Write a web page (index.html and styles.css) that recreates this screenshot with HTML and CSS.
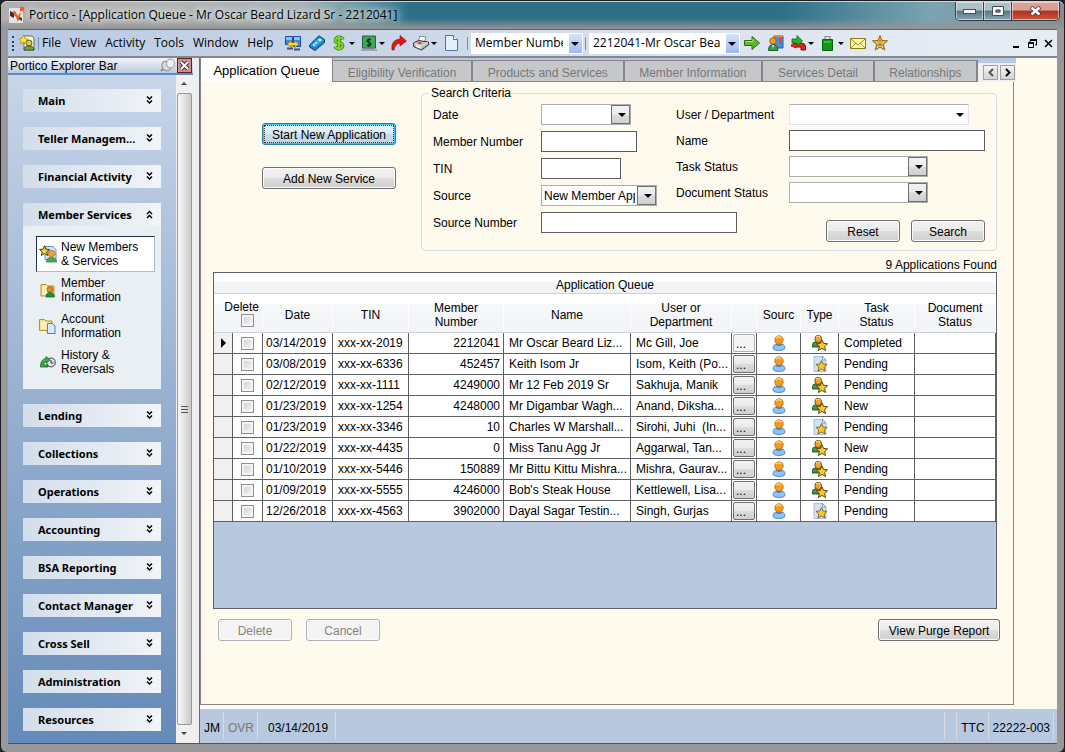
FILE: index.html
```html
<!DOCTYPE html>
<html lang="en">
<head>
  <meta charset="UTF-8" />
  <meta name="viewport" content="width=device-width, initial-scale=1.0" />
  <title>Portico - Application Queue</title>
  <link rel="stylesheet" href="styles.css">
</head>
<body>

  <!-- Shared icons -->
  <svg class="sprite" aria-hidden="true">
    <symbol id="i-person" viewBox="0 0 16 16">
      <path d="M2 13.500Q2 9 6 9h4q4 0 4 4.500Q13 15.500 8 15.500T2 13.500z" fill="#8cc4fa" stroke="#3c78c8" stroke-width=".8"/>
      <path d="M5 9.500q3 2 6 0" fill="none" stroke="#2f6cc0"/>
      <circle cx="8" cy="5" r="4.200" fill="#f79a1c" stroke="#b4650c" stroke-width=".8"/>
      <path d="M5 3q3-2.500 5.500 0" stroke="#ffd070" stroke-width="1.500" fill="none"/>
    </symbol>
    <symbol id="i-member-star" viewBox="0 0 16 16">
      <path d="M.5 12V9.500q0-2.500 3-2.500h5q2 0 2 3v2z" fill="#3f9a48" stroke="#1c5a26"/>
      <path d="M5 7.500l1.500 3L8 7.500z" fill="#fff"/>
      <rect x="3" y=".5" width="6.500" height="7" rx="3" fill="#f0a02c" stroke="#6e4a08"/>
      <path d="M4 2q2.500-1.500 4.500 0" stroke="#ffe28a" fill="none"/>
      <path d="M10 4.800l1.600 3.600 4 .4-3 2.700 1 4.100-3.600-2.200-3.600 2.200 1-4.100-3-2.700 4-.4z" fill="#f8c82c" stroke="#5c4810"/>
    </symbol>
    <symbol id="i-page-star" viewBox="0 0 16 16">
      <path d="M2 .5h8.500L14 4v11.500H2z" fill="#d0e2f8" stroke="#a9bedb"/>
      <path d="M10.500.5V4H14z" fill="#fff" stroke="#5c8cc8" stroke-width=".8"/>
      <path d="M9.500 4.500l1.600 3.500 4 .4-3 2.600 1 4-3.600-2-3.600 2 1-4-3-2.600 4-.4z" fill="#f8c82c" stroke="#7a6220" stroke-width=".9"/>
    </symbol>
    <symbol id="i-new-member" viewBox="0 0 18 18">
      <path d="M6 1.500h8l3 3v10H6z" fill="#d3e5fb" stroke="#5f8fd0"/>
      <circle cx="12.500" cy="8.500" r="3.300" fill="#f0a33a" stroke="#a86a14" stroke-width=".7"/>
      <path d="M7.500 17q0-4.500 5-4.500t5 4.500z" fill="#4ba657" stroke="#26702f" stroke-width=".7"/>
      <path d="M5.500.8l1.400 3.400 3.600.3-2.800 2.400.9 3.600-3.100-2-3.100 2 .9-3.600L.5 4.500l3.600-.3z" fill="#f9d43a" stroke="#4c3c08"/>
    </symbol>
    <symbol id="i-folder-member" viewBox="0 0 18 18">
      <path d="M2 3.500h5l1.500 1.500H15v10H2z" fill="#f9e08a" stroke="#b5922c"/>
      <path d="M3 6h7v8H3z" fill="#fdf0b8"/>
      <circle cx="11" cy="8.500" r="3" fill="#e08a28" stroke="#8a5010" stroke-width=".7"/>
      <path d="M7 16q0-4.500 4-4.500t4.500 4.500z" fill="#16963a" stroke="#0b5a20" stroke-width=".7"/>
    </symbol>
    <symbol id="i-folder-page" viewBox="0 0 18 18">
      <path d="M.500 2.500h5L7 4h6v9.500H.5z" fill="#f9e08a" stroke="#b5922c"/>
      <path d="M2 5h7v7H2z" fill="#fdf0b8"/>
      <path d="M8.500 6.500h5l2.500 2.500v7.500H8.500z" fill="#d8eafd" stroke="#4f80bd"/>
    </symbol>
    <symbol id="i-history" viewBox="0 0 18 18">
      <circle cx="12" cy="9.500" r="4.300" fill="#dfe4ea" stroke="#5c6a76" stroke-width="1.200"/>
      <path d="M12 7v3h2.500" stroke="#333" fill="none"/>
      <path d="M1.500 13Q2 6 7 5.500V3.500l4 3.500-4 3V8.500Q5 9 4.500 12H9v2H1.500z" fill="#3fae49" stroke="#0e6420" stroke-width=".8"/>
    </symbol>
    <symbol id="i-chevrons-down" viewBox="0 0 7 9">
      <path d="M1 .5l2.500 2.500L6 .5M1 4.500L3.500 7 6 4.500" fill="none" stroke="#000" stroke-width="1.500"/>
    </symbol>
    <symbol id="i-chevrons-up" viewBox="0 0 7 9">
      <path d="M1 4l2.500-2.500L6 4M1 8l2.500-2.500L6 8" fill="none" stroke="#000" stroke-width="1.500"/>
    </symbol>
  </svg>

  <div class="window">

    <header class="titlebar">
      <svg class="app-icon" viewBox="0 0 16 16" aria-hidden="true">
        <rect x="0" y="1" width="14" height="15" fill="#e4e4e4"/>
        <path d="M1 4l4 2v5L1 9z" fill="#333"/><path d="M9 9l4 2v3L9 12z" fill="#444"/>
        <path d="M4 4l2 0 3 5 2-3 1 1-2 4-1 4-2-5-2-2z" fill="#f06018"/><rect x="11" y="0" width="4" height="4" fill="#ff5a10"/>
      </svg>
      <h1>Portico - [Application Queue - Mr Oscar Beard Lizard Sr - 2212041]</h1>
      <div class="window-buttons">
        <button type="button" aria-label="Minimize"><svg width="13" height="5"><rect x=".5" y=".5" width="12" height="4" fill="#fff" stroke="#444c58"/></svg></button>
        <button type="button" aria-label="Maximize"><svg width="12" height="10"><rect x="2" y="2" width="8" height="6" fill="none" stroke="#fff" stroke-width="3"/><path d="M.5.500h11v9H.5zM4 4h4v2H4z" fill="none" stroke="#444c58"/></svg></button>
        <button type="button" class="close" aria-label="Close"><svg width="13" height="10" viewBox="0 0 13 10"><path d="M2 1l9 8M11 1L2 9" stroke="#603030" stroke-width="4"/><path d="M2.500 1.500l8 7M10.500 1.500l-8 7" stroke="#fff" stroke-width="2.500"/></svg></button>
      </div>
    </header>

    <div class="menubar">
      <span class="grip"></span>
      <svg class="doc-icon" viewBox="0 0 16 16" aria-hidden="true"><path d="M5 1h8l2 2v12H5z" fill="#f4f6e4" stroke="#68743c"/><circle cx="10" cy="8" r="3" fill="#e6c24c" stroke="#54642c"/><path d="M5 15q0-4 5-4t5 4z" fill="#7fa040" stroke="#3c5820"/><path d="M4.500 0L6 3.500l3 .5-2 2 .5 3L4.500 7 1.500 9 2 6 0 4l3-.5z" fill="#fbe83a" stroke="#a08810" stroke-width=".7"/></svg>
      <span class="separator"></span>
      <nav class="menu">
        <button type="button">File</button>
        <button type="button">View</button>
        <button type="button">Activity</button>
        <button type="button">Tools</button>
        <button type="button">Window</button>
        <button type="button">Help</button>
      </nav>

      <div class="toolbar">
        <button type="button" aria-label="Switch computers"><svg viewBox="0 0 16 16"><path d="M.5 1.500h7v8h-7zM8.500 1.500h7v10h-7z" fill="#3c86e8" stroke="#1c4a9c"/><path d="M1 2h6v3H1zM9 2h6v3H9z" fill="#8cc0f8"/><path d="M2 13.500h6M9 14.500h6" stroke="#444a80" stroke-width="2"/><path d="M2.500 9L6 5.500v2h4v-2L13.500 9 10 12.500v-2H6v2z" fill="#fbd838" stroke="#94740c" stroke-width=".7"/></svg></button>
        <button type="button" class="wide-gap" aria-label="Calculator"><svg viewBox="0 0 16 16"><path d="M.5 10L10 .8l5.500 3.700v3L6 15.500.5 12z" fill="#1c86c4" stroke="#0b3f70"/><path d="M2 10l8-7.500 4 2.700-8 7.300z" fill="#38a8e0"/><path d="M9 5l2-1.500 2 1.500-2 1.500z" fill="#d8f4ff"/><path d="M4 10h2M6 8h2" stroke="#d8f4ff" stroke-width="1.500"/></svg></button>
        <button type="button" class="has-menu" aria-label="Money"><svg viewBox="0 0 16 16"><path d="M12 4.500Q11 2.500 8 2.500T4.500 5 8 8t3.500 3T8 13.500 4 11.500M8 .5v15" fill="none" stroke="#2f7c10" stroke-width="3.600"/><path d="M12 4.500Q11 2.500 8 2.500T4.500 5 8 8t3.500 3T8 13.500 4 11.500M8 .5v15" fill="none" stroke="#80d428" stroke-width="2.200"/></svg></button>
        <button type="button" class="has-menu" aria-label="Cash"><svg viewBox="0 0 16 16"><path d="M1.500 1h13v12h-13z" fill="#43a55a" stroke="#27613a"/><path d="M0 15h16M2 13h12" stroke="#777"/><path d="M10 5q-2-1.500-3.500 0T8 7.500t1.500 2.500T6 10M8 3v9" fill="none" stroke="#0b3417" stroke-width="1.200"/></svg></button>
        <button type="button" aria-label="Reverse"><svg viewBox="0 0 16 16"><path d="M1 15Q-.5 5 9 4V.5L15.500 6 9 11V8Q4 8.500 3 15z" fill="#e01818" stroke="#8c0808" stroke-width=".6"/></svg></button>
        <button type="button" class="has-menu" aria-label="Print"><svg viewBox="0 0 16 16"><path d="M7 1l6 1-2 6-6-1z" fill="#fff" stroke="#888"/><path d="M.5 8l5-2.500 10 1.500v3l-7 5-8-3.500z" fill="#b9b9b4" stroke="#333"/><path d="M1 8.500L8.500 11l6.500-4" fill="none" stroke="#eee"/><path d="M5 8h3" stroke="#e02020" stroke-width="1.500"/><path d="M3 11l5 2" stroke="#fff" stroke-width="1.500"/></svg></button>
        <button type="button" aria-label="New page"><svg viewBox="0 0 16 16"><path d="M2.500.5h8l4 4v11h-12z" fill="#e3effc" stroke="#4a74ac"/><path d="M10.500.5v4h4" fill="#fff" stroke="#4a74ac"/></svg></button>
      </div>
      <span class="separator"></span>
      <span class="tool-combo by"><select aria-label="Search by"><option>Member Number</option></select></span>
      <span class="separator"></span>
      <span class="tool-combo member"><select aria-label="Member"><option>2212041-Mr Oscar Beard Lizard Sr</option></select></span>
      <div class="toolbar">
        <button type="button" aria-label="Go"><svg viewBox="0 0 16 16"><path d="M.5 5.500H8V1.500L15.500 8 8 14.500v-4H.5z" fill="#62b62a" stroke="#2d6c12"/><path d="M1.500 6.500H9V4" stroke="#b0e080" fill="none"/></svg></button>
        <button type="button" class="wide-gap" aria-label="Contacts"><svg viewBox="0 0 16 16"><path d="M6 1h9v12H6z" fill="#4a90e0" stroke="#245aa8"/><path d="M6 1h9" stroke="#d89030" stroke-width="2"/><path d="M12 3v6" stroke="#e04040" stroke-width="2"/><circle cx="5" cy="6" r="3.300" fill="#f09a28" stroke="#8c5410" stroke-width=".8"/><path d="M.5 15.500q0-6 4.500-6t5 6z" fill="#3c9c48" stroke="#1c5c28"/><path d="M4 10l1 3 1-3z" fill="#fff"/></svg></button>
        <button type="button" class="has-menu" aria-label="Call"><svg viewBox="0 0 16 16"><path d="M2 11q0-3 4-3h5q4 0 4.500 3v4H11v-3H6v1z" fill="#e02222" stroke="#800c0c"/><path d="M1 9h6v3H1z" fill="#e02222"/><path d="M2 4h5V.500L12.500 6 7 11V8H2z" fill="#22b822" stroke="#0c680c" stroke-width=".8"/></svg></button>
        <button type="button" class="has-menu" aria-label="Bag"><svg viewBox="0 0 16 16"><path d="M5 4V1.500h5V4" fill="none" stroke="#888" stroke-width="1.200"/><path d="M2.500 4.500h10v11h-10z" fill="#0c9a18" stroke="#06600e"/><path d="M4 6h7v2H4z" fill="#30c03c"/></svg></button>
        <button type="button" aria-label="Mail"><svg viewBox="0 0 16 16"><path d="M.5 3.500h15v10H.5z" fill="#fff9a8" stroke="#8a7c10"/><path d="M1 4l7 6 7-6M1 13l5-5M15 13l-5-5" fill="none" stroke="#a89820"/></svg></button>
        <button type="button" aria-label="Favorites"><svg viewBox="0 0 16 16"><path d="M8 .5l2 5 5.500.3-4.200 3.600 1.400 5.600L8 12l-4.700 3 1.400-5.600L.5 5.800 6 5.500z" fill="#f8c030" stroke="#8a6414"/><circle cx="8" cy="6" r="1.800" fill="#e88c28"/><path d="M5.500 11q0-3 2.500-3t2.500 3z" fill="#5c9cd8"/></svg></button>
      </div>
      <div class="child-buttons">
        <button type="button" aria-label="Minimize page"><svg width="11" height="11"><path d="M2 9h6" stroke="#000" stroke-width="2"/></svg></button>
        <button type="button" aria-label="Restore page"><svg width="11" height="11"><path d="M3 4V2.500h6.500V7H8M1.500 5.500h5v4h-5z" fill="none" stroke="#000"/><path d="M3 2h7M1 5h6" stroke="#000" stroke-width="2"/></svg></button>
        <button type="button" aria-label="Close page"><svg width="11" height="11"><path d="M2 2l7 7M9 2L2 9" stroke="#000" stroke-width="1.500"/></svg></button>
      </div>
    </div>

    <div class="workspace">

      <!-- Explorer bar -->
      <aside class="explorer">
        <div class="explorer-header">
          <h2>Portico Explorer Bar</h2>
          <button type="button" class="pin" aria-label="Pin"><svg width="16" height="15" viewBox="0 0 16 15"><path d="M1 13l4-4" stroke="#777" stroke-width="1.500"/><ellipse cx="6.500" cy="8" rx="4.500" ry="5" fill="#d5d8dc" stroke="#909498" transform="rotate(-40 6.500 8)"/><ellipse cx="10.500" cy="5.500" rx="4" ry="4.500" fill="#eef0f2" stroke="#999da2"/></svg></button>
          <button type="button" class="close-bar" aria-label="Close bar"><svg width="11" height="11"><path d="M2 2l7 7M9 2L2 9" stroke="#333" stroke-width="4"/><path d="M2 2l7 7M9 2L2 9" stroke="#fff" stroke-width="2"/></svg></button>
        </div>
        <div class="explorer-body">
          <nav class="groups">
            <button type="button" class="group">Main <svg><use href="#i-chevrons-down"/></svg></button>
            <button type="button" class="group">Teller Managem... <svg><use href="#i-chevrons-down"/></svg></button>
            <button type="button" class="group">Financial Activity <svg><use href="#i-chevrons-down"/></svg></button>
            <div>
              <button type="button" class="group">Member Services <svg><use href="#i-chevrons-up"/></svg></button>
              <ul class="group-links">
                <li><a href="#" class="selected"><svg><use href="#i-new-member"/></svg><span>New Members<br>&amp; Services</span></a></li>
                <li><a href="#"><svg><use href="#i-folder-member"/></svg><span>Member<br>Information</span></a></li>
                <li><a href="#"><svg><use href="#i-folder-page"/></svg><span>Account<br>Information</span></a></li>
                <li><a href="#"><svg><use href="#i-history"/></svg><span>History &amp;<br>Reversals</span></a></li>
              </ul>
            </div>
            <button type="button" class="group">Lending <svg><use href="#i-chevrons-down"/></svg></button>
            <button type="button" class="group">Collections <svg><use href="#i-chevrons-down"/></svg></button>
            <button type="button" class="group">Operations <svg><use href="#i-chevrons-down"/></svg></button>
            <button type="button" class="group">Accounting <svg><use href="#i-chevrons-down"/></svg></button>
            <button type="button" class="group">BSA Reporting <svg><use href="#i-chevrons-down"/></svg></button>
            <button type="button" class="group">Contact Manager <svg><use href="#i-chevrons-down"/></svg></button>
            <button type="button" class="group">Cross Sell <svg><use href="#i-chevrons-down"/></svg></button>
            <button type="button" class="group">Administration <svg><use href="#i-chevrons-down"/></svg></button>
            <button type="button" class="group">Resources <svg><use href="#i-chevrons-down"/></svg></button>
          </nav>
          <div class="scrollbar">
            <span class="scroll-arrow up"></span>
            <span class="scroll-thumb"><i></i><i></i><i></i></span>
            <span class="scroll-arrow down"></span>
          </div>
        </div>
      </aside>

      <main class="page">
        <div class="tab-row">
          <div class="tabs" role="tablist">
            <button type="button" role="tab" aria-selected="true" class="tab active">Application Queue</button>
            <button type="button" role="tab" class="tab">Eligibility Verification</button>
            <button type="button" role="tab" class="tab">Products and Services</button>
            <button type="button" role="tab" class="tab">Member Information</button>
            <button type="button" role="tab" class="tab">Services Detail</button>
            <button type="button" role="tab" class="tab">Relationships</button>
          </div>
          <div class="tab-scroll">
            <button type="button" aria-label="Previous tabs"><svg width="8" height="9"><path d="M6 1L2.500 4.500 6 8" fill="none" stroke="#555" stroke-width="2"/></svg></button>
            <button type="button" aria-label="Next tabs"><svg width="8" height="9"><path d="M2 1l3.500 3.500L2 8" fill="none" stroke="#000" stroke-width="2"/></svg></button>
          </div>
        </div>

        <div class="panel">
          <div class="top-section">
            <div class="actions">
              <button type="button" class="btn focused">Start New Application</button>
              <button type="button" class="btn">Add New Service</button>
            </div>

            <form>
              <fieldset class="criteria">
                <legend>Search Criteria</legend>
                <div class="fields">
                  <div class="left-fields">
                    <label for="date">Date</label>
                    <span class="combo w-date"><select id="date"><option></option></select></span>
                    <label for="memberNumber">Member Number</label>
                    <input type="text" id="memberNumber" class="w-number">
                    <label for="tin">TIN</label>
                    <input type="text" id="tin" class="w-tin">
                    <label for="source">Source</label>
                    <span class="combo w-source"><select id="source"><option>New Member Application</option></select></span>
                    <label for="sourceNumber">Source Number</label>
                    <input type="text" id="sourceNumber" class="w-long">
                  </div>
                  <div class="right-fields">
                    <label for="user">User / Department</label>
                    <span class="combo plain w-user"><select id="user"><option></option></select></span>
                    <label for="name">Name</label>
                    <input type="text" id="name" class="w-long">
                    <label for="taskStatus">Task Status</label>
                    <span class="combo w-status"><select id="taskStatus"><option></option></select></span>
                    <label for="documentStatus">Document Status</label>
                    <span class="combo w-status"><select id="documentStatus"><option></option></select></span>
                    <div class="form-buttons">
                      <button type="reset" class="btn small">Reset</button>
                      <button type="button" class="btn small">Search</button>
                    </div>
                  </div>
                </div>
              </fieldset>
            </form>
          </div>

          <p class="found">9 Applications Found</p>

          <div class="queue">
            <table>
              <caption>Application Queue</caption>
              <colgroup>
                <col class="c-mark"><col class="c-check"><col class="c-date"><col class="c-tin"><col class="c-number"><col class="c-name">
                <col class="c-user"><col class="c-more"><col class="c-source"><col class="c-type"><col class="c-task"><col class="c-doc">
              </colgroup>
              <thead>
                <tr>
                  <th colspan="2" class="delete-head"><label for="deleteAll">Delete</label><input type="checkbox" id="deleteAll"></th>
                  <th>Date</th>
                  <th>TIN</th>
                  <th>Member<br>Number</th>
                  <th>Name</th>
                  <th>User or<br>Department</th>
                  <th></th>
                  <th>Sourc</th>
                  <th>Type</th>
                  <th>Task<br>Status</th>
                  <th>Document<br>Status</th>
                </tr>
              </thead>
              <tbody>
                <tr>
                  <td class="mark"><span class="current"></span></td>
                  <td class="icon"><input type="checkbox" aria-label="Delete row 1"></td>
                  <td>03/14/2019</td><td class="tin">xxx-xx-2019</td><td class="num">2212041</td><td>Mr Oscar Beard Liz...</td><td>Mc Gill, Joe</td>
                  <td class="more"><button type="button" disabled>...</button></td>
                  <td class="icon"><svg><use href="#i-person"/></svg></td><td class="icon"><svg><use href="#i-member-star"/></svg></td>
                  <td>Completed</td><td></td>
                </tr>
                <tr>
                  <td class="mark"></td>
                  <td class="icon"><input type="checkbox" aria-label="Delete row 2"></td>
                  <td>03/08/2019</td><td class="tin">xxx-xx-6336</td><td class="num">452457</td><td>Keith Isom Jr</td><td>Isom, Keith (Po...</td>
                  <td class="more"><button type="button">...</button></td>
                  <td class="icon"><svg><use href="#i-person"/></svg></td><td class="icon"><svg><use href="#i-page-star"/></svg></td>
                  <td>Pending</td><td></td>
                </tr>
                <tr>
                  <td class="mark"></td>
                  <td class="icon"><input type="checkbox" aria-label="Delete row 3"></td>
                  <td>02/12/2019</td><td class="tin">xxx-xx-1111</td><td class="num">4249000</td><td>Mr 12 Feb 2019 Sr</td><td>Sakhuja, Manik</td>
                  <td class="more"><button type="button">...</button></td>
                  <td class="icon"><svg><use href="#i-person"/></svg></td><td class="icon"><svg><use href="#i-member-star"/></svg></td>
                  <td>Pending</td><td></td>
                </tr>
                <tr>
                  <td class="mark"></td>
                  <td class="icon"><input type="checkbox" aria-label="Delete row 4"></td>
                  <td>01/23/2019</td><td class="tin">xxx-xx-1254</td><td class="num">4248000</td><td>Mr Digambar Wagh...</td><td>Anand, Diksha...</td>
                  <td class="more"><button type="button">...</button></td>
                  <td class="icon"><svg><use href="#i-person"/></svg></td><td class="icon"><svg><use href="#i-member-star"/></svg></td>
                  <td>New</td><td></td>
                </tr>
                <tr>
                  <td class="mark"></td>
                  <td class="icon"><input type="checkbox" aria-label="Delete row 5"></td>
                  <td>01/23/2019</td><td class="tin">xxx-xx-3346</td><td class="num">10</td><td>Charles W Marshall...</td><td>Sirohi, Juhi&nbsp; (In...</td>
                  <td class="more"><button type="button">...</button></td>
                  <td class="icon"><svg><use href="#i-person"/></svg></td><td class="icon"><svg><use href="#i-page-star"/></svg></td>
                  <td>Pending</td><td></td>
                </tr>
                <tr>
                  <td class="mark"></td>
                  <td class="icon"><input type="checkbox" aria-label="Delete row 6"></td>
                  <td>01/22/2019</td><td class="tin">xxx-xx-4435</td><td class="num">0</td><td>Miss Tanu Agg Jr</td><td>Aggarwal, Tan...</td>
                  <td class="more"><button type="button">...</button></td>
                  <td class="icon"><svg><use href="#i-person"/></svg></td><td class="icon"><svg><use href="#i-member-star"/></svg></td>
                  <td>New</td><td></td>
                </tr>
                <tr>
                  <td class="mark"></td>
                  <td class="icon"><input type="checkbox" aria-label="Delete row 7"></td>
                  <td>01/10/2019</td><td class="tin">xxx-xx-5446</td><td class="num">150889</td><td>Mr Bittu Kittu Mishra...</td><td>Mishra, Gaurav...</td>
                  <td class="more"><button type="button">...</button></td>
                  <td class="icon"><svg><use href="#i-person"/></svg></td><td class="icon"><svg><use href="#i-member-star"/></svg></td>
                  <td>Pending</td><td></td>
                </tr>
                <tr>
                  <td class="mark"></td>
                  <td class="icon"><input type="checkbox" aria-label="Delete row 8"></td>
                  <td>01/09/2019</td><td class="tin">xxx-xx-5555</td><td class="num">4246000</td><td>Bob's Steak House</td><td>Kettlewell, Lisa...</td>
                  <td class="more"><button type="button">...</button></td>
                  <td class="icon"><svg><use href="#i-person"/></svg></td><td class="icon"><svg><use href="#i-member-star"/></svg></td>
                  <td>Pending</td><td></td>
                </tr>
                <tr>
                  <td class="mark"></td>
                  <td class="icon"><input type="checkbox" aria-label="Delete row 9"></td>
                  <td>12/26/2018</td><td class="tin">xxx-xx-4563</td><td class="num">3902000</td><td>Dayal Sagar Testin...</td><td>Singh, Gurjas</td>
                  <td class="more"><button type="button">...</button></td>
                  <td class="icon"><svg><use href="#i-person"/></svg></td><td class="icon"><svg><use href="#i-page-star"/></svg></td>
                  <td>Pending</td><td></td>
                </tr>
              </tbody>
            </table>
          </div>

          <div class="panel-buttons">
            <button type="button" class="btn small" disabled>Delete</button>
            <button type="button" class="btn small" disabled>Cancel</button>
            <button type="button" class="btn purge">View Purge Report</button>
          </div>
        </div>

        <footer class="statusbar">
          <span>JM</span>
          <span class="off">OVR</span>
          <span class="status-date">03/14/2019</span>
          <span class="spacer"></span>
          <span></span>
          <span>TTC</span>
          <span>22222-003</span>
        </footer>
      </main>
    </div>
  </div>

</body>
</html>
```
FILE: styles.css
```css
* {
  box-sizing: border-box;
}

body {
  margin: 0;
  font-family: "Liberation Sans", Arial, sans-serif;
  font-size: 12px;
  line-height: 14px;
  color: #000;
  background: #1c2226;
}

button, input, select {
  font: inherit;
  color: inherit;
  margin: 0;
}

button {
  padding: 0;
  border: none;
  background: none;
}

h1, h2, p, ul {
  margin: 0;
  padding: 0;
  font-size: inherit;
  font-weight: normal;
  list-style: none;
}

.sprite {
  display: none;
}

/* Window frame */
.window {
  display: flex;
  flex-direction: column;
  min-height: 100vh;
  padding: 0 7px 8px;
  border: 1px solid #1c1c20;
  border-radius: 7px;
  background: #98989a;
}

.titlebar {
  display: flex;
  align-items: center;
  height: 28px;
  margin: 0 -7px;
  padding: 0 0 1px 8px;
  border-top: 1px solid #d0d4d6;
  border-radius: 6px 6px 0 0;
  background: linear-gradient(180deg, rgba(150, 150, 150, 0) 60%, #949494), linear-gradient(90deg, #b0aeae, #b4b4b4 100px, #a9b4b8 300px, #5c909f 375px, #2d6f87 410px, #2e7088 780px, #7ba4b0 930px, #7d8e93);
}

.app-icon {
  width: 16px;
  height: 16px;
  margin-right: 4px;
}

.titlebar h1 {
  flex: 1;
  font-family: "Open Sans", sans-serif;
  font-size: 12px;
  white-space: nowrap;
  text-shadow: 0 0 6px #fff, 0 0 8px #fff;
}

.window-buttons {
  display: flex;
  align-self: flex-start;
  height: 19px;
  margin-right: 4px;
  border: 1px solid #30404a;
  border-top: none;
  border-radius: 0 0 5px 5px;
  overflow: hidden;
}

.window-buttons button {
  display: flex;
  align-items: center;
  justify-content: center;
  width: 28px;
  border-right: 1px solid #30404a;
  background: linear-gradient(#aec0c7 45%, #557783 50%, #8aa7b2);
  box-shadow: inset 0 0 0 1px rgba(255, 255, 255, .5);
}

.window-buttons .close {
  width: 47px;
  border-right: none;
  background: linear-gradient(#d8a097 45%, #b03020 50%, #c8583c);
}

/* Menu and toolbar */
.menubar {
  display: flex;
  align-items: center;
  height: 29px;
  padding-left: 4px;
  border-top: 1px solid #5c6468;
  border-bottom: 2px solid #85878a;
  background: linear-gradient(90deg, #b8cae4, #cfdaea 45%, #e6ecf4 90%);
}

.grip {
  width: 3px;
  height: 15px;
  border-left: 2px dotted #27416f;
}

.doc-icon {
  width: 16px;
  height: 16px;
  margin: 0 3px 0 4px;
}

.separator {
  width: 1px;
  height: 13px;
  background: #6b93d0;
}

.menu {
  display: flex;
  flex: 0 0 246px;
  gap: 9px;
  padding-left: 3px;
  font-family: "Open Sans", sans-serif;
  font-size: 12px;
}

.toolbar {
  display: flex;
  align-items: center;
  gap: 6px;
  padding-right: 8px;
}

.toolbar button {
  display: flex;
  align-items: center;
  height: 20px;
}

.toolbar svg {
  width: 16px;
  height: 16px;
}

.toolbar .wide-gap {
  margin-left: 2px;
}

.toolbar .has-menu::after {
  content: "";
  margin-left: 2px;
  border: 3px solid transparent;
  border-top-color: #000;
  border-bottom: none;
}

.tool-combo {
  position: relative;
  height: 21px;
  margin-left: 3px;
  background: #fff;
}

.tool-combo.by {
  width: 112px;
  margin-right: 2px;
}

.tool-combo.member {
  width: 151px;
  margin-right: 4px;
}

.tool-combo select {
  appearance: none;
  width: 100%;
  height: 21px;
  padding: 0 20px 0 4px;
  border: none;
  background: none;
  font-family: "Open Sans", sans-serif;
  font-size: 12px;
}

.tool-combo::before,
.combo::before {
  content: "";
  position: absolute;
  top: 1px;
  right: 1px;
  bottom: 1px;
  width: 13px;
  background: linear-gradient(#d6e4fa, #9bbcee);
  pointer-events: none;
}

.tool-combo::after,
.combo::after {
  content: "";
  position: absolute;
  top: 9px;
  right: 4px;
  border: 4px solid transparent;
  border-top-color: #000;
  border-bottom: none;
  pointer-events: none;
}

.child-buttons {
  display: flex;
  gap: 5px;
  margin-left: auto;
  padding-right: 3px;
}

.child-buttons button,
.child-buttons svg {
  display: block;
  width: 11px;
  height: 11px;
}

/* Explorer bar */
.workspace {
  display: flex;
  flex: 1;
  border-bottom: 1px solid #555;
  background: #eeeeee;
}

.explorer {
  display: flex;
  flex-direction: column;
  width: 185px;
  margin-right: 6px;
}

.explorer-header {
  display: flex;
  align-items: center;
  height: 17px;
  padding: 0 1px 0 2px;
  border-bottom: 2px solid #5f8bc0;
  background: linear-gradient(#f0f4f9, #b9cce2);
}

.explorer-header h2 {
  flex: 1;
}

.pin svg {
  display: block;
}

.close-bar {
  display: flex;
  align-items: center;
  justify-content: center;
  width: 15px;
  height: 15px;
  margin-left: 1px;
  border: 1px solid #5c2020;
  background: #d09090;
}

.explorer-body {
  display: flex;
  flex: 1;
}

.groups {
  display: flex;
  flex-direction: column;
  gap: 15px;
  flex: 1;
  padding: 14px 15px 12px;
  background: linear-gradient(#c8d5e8, #648ab8);
}

.group {
  display: flex;
  align-items: center;
  justify-content: space-between;
  width: 100%;
  height: 23px;
  padding: 0 8px 0 15px;
  background: linear-gradient(90deg, #d3deeb, #f1f4f8);
  font-family: "Noto Sans", sans-serif;
  font-size: 11px;
  font-weight: bold;
  white-space: nowrap;
}

.group svg {
  width: 7px;
  height: 9px;
}

.group-links {
  height: 163px;
  padding: 10px 6px 10px 13px;
  background: #eaeff4;
}

.group-links a {
  display: flex;
  align-items: center;
  gap: 4px;
  height: 36px;
  padding-left: 2px;
  border: 1px solid transparent;
  color: #000;
  text-decoration: none;
}

.group-links a.selected {
  border-color: #1f2f4a #a9bcd8 #a9bcd8 #1f2f4a;
  background: #fff;
}

.group-links svg {
  width: 18px;
  height: 18px;
}

.scrollbar {
  display: flex;
  flex-direction: column;
  width: 17px;
  background: #f0f0f0;
}

.scroll-arrow {
  height: 18px;
  padding: 7px 5px;
}

.scroll-arrow::after {
  content: "";
  display: block;
  width: 0;
  border: 3px solid transparent;
}

.scroll-arrow.up::after {
  border-top: none;
  border-bottom-color: #444;
}

.scroll-arrow.down::after {
  border-bottom: none;
  border-top-color: #444;
}

.scroll-thumb {
  display: flex;
  flex: 1;
  flex-direction: column;
  align-items: center;
  justify-content: center;
  gap: 2px;
  margin: 0 1px;
  border: 1px solid #979797;
  border-radius: 2px;
  background: linear-gradient(90deg, #f6f6f6, #e4e4e6 45%, #c8c8cc);
}

.scroll-thumb i {
  width: 7px;
  height: 1px;
  background: #555;
}

/* Page */
.page {
  display: flex;
  flex: 1;
  flex-direction: column;
  min-width: 0;
  border-left: 1px solid #6c6c70;
  background: #fffaee;
}

.tab-row {
  display: flex;
  height: 24px;
  margin-right: 41px;
  background: #b8c9df;
}

.tabs {
  display: flex;
  flex: 1;
  align-items: flex-end;
  min-width: 0;
  overflow: hidden;
  border-left: 1px solid #808088;
}

.tab {
  flex: 1 0 auto;
  height: 22px;
  padding-top: 4px;
  border: 1px solid #85858a;
  border-width: 1px 2px 1px 0;
  background: #c6c7c9;
  color: #77777b;
  white-space: nowrap;
}

.tab.active {
  flex: 0 0 132px;
  height: 24px;
  padding: 2px 0 1px;
  border-width: 0 1px 0 0;
  background: #fff;
  color: #000;
  font-size: 13px;
}

.tab-scroll {
  display: flex;
  align-items: flex-end;
  gap: 2px;
  margin-top: 5px;
  padding: 0 1px 2px 5px;
  background: #eef0f2;
}

.tab-scroll button {
  display: flex;
  align-items: center;
  justify-content: center;
  width: 15px;
  height: 15px;
  border: 1px solid #a0a0a4;
  background: linear-gradient(#f4f4f4, #d4d4d4);
}

.panel {
  flex: 1;
  margin: 0 43px 4px 0;
  padding: 4px 13px 0 12px;
  border: 1px solid #85868c;
  border-top: none;
}

.top-section {
  display: flex;
  padding-right: 3px;
}

.actions {
  display: flex;
  flex: 0 0 208px;
  flex-direction: column;
  gap: 22px;
  padding: 37px 25px 0 49px;
}

form {
  flex: 1;
  min-width: 0;
}

.btn {
  height: 22px;
  padding-top: 1px;
  border: 1px solid #707070;
  border-radius: 3px;
  background: linear-gradient(#f2f2f2, #ebebeb 50%, #dddddd 50%, #cfcfcf);
  box-shadow: inset 0 0 0 1px #fbfbfb;
  white-space: nowrap;
}

.btn.small {
  width: 74px;
}

.btn.focused {
  border-color: #2c7fa8;
  background: linear-gradient(#eaf4f9, #dcebf3 50%, #c9dfeb 50%, #bcd4e2);
  box-shadow: inset 0 0 0 1px #3bc4ee;
  outline: 1px dotted #333;
  outline-offset: -3px;
}

.btn:disabled {
  border-color: #adb2b5;
  background: #f4f4f4;
  color: #838383;
}

.criteria {
  height: 165px;
  min-width: 0;
  margin: 0;
  padding: 4px 11px 0;
  border: 1px solid #d5dfe5;
  border-radius: 4px;
}

.criteria legend {
  margin-left: -4px;
  padding: 0 2px;
}

.fields {
  display: flex;
  align-items: flex-start;
  justify-content: space-between;
}

.left-fields,
.right-fields {
  display: grid;
  grid-template-columns: 108px 96px;
  align-items: center;
  justify-items: start;
  row-gap: 6px;
}

.right-fields {
  grid-template-columns: 113px auto;
  row-gap: 5px;
}

.criteria input {
  height: 21px;
  padding: 0 3px;
  border: 1px solid #5c5c60;
  background: #fff;
}

.combo {
  position: relative;
  height: 21px;
  border: 1px solid #abadb3;
  background: #fff;
}

.combo select {
  display: block;
  appearance: none;
  width: 100%;
  height: 19px;
  padding: 0 21px 0 2px;
  border: none;
  background: none;
}

.combo::before {
  top: 0;
  right: 0;
  bottom: 0;
  width: 17px;
  border: 1px solid #707070;
  background: linear-gradient(#f2f2f2, #ebebeb 50%, #dddddd 50%, #cfcfcf);
}

.combo::after {
  top: 8px;
}

.combo.plain {
  border-color: #abadb3 #e2e3ea #e2e3ea;
}

.combo.plain::before {
  display: none;
}

.w-date { width: 90px; }
.w-number { width: 96px; }
.w-tin { width: 80px; }
.w-source { width: 116px; }
.w-long { width: 196px; }
.w-user { width: 180px; }
.w-status { width: 139px; }

.form-buttons {
  grid-column: 1 / 3;
  justify-self: end;
  display: flex;
  gap: 11px;
  margin-top: 12px;
}

.found {
  padding: 7px 3px 0 0;
  text-align: right;
}

/* Queue table */
.queue {
  height: 337px;
  margin-right: 3px;
  border: 1px solid #5f6064;
  background: #b8c9df;
}

.queue table {
  width: 100%;
  table-layout: fixed;
  border-collapse: separate;
  border-spacing: 0;
}

.queue caption {
  height: 21px;
  padding-top: 5px;
  border-bottom: 1px solid #cfd2d6;
  background: linear-gradient(#fff 40%, #f5f7f9 40%, #eff1f4);
}

.c-mark { width: 19px; }
.c-check { width: 30px; }
.c-date { width: 70px; }
.c-tin { width: 76px; }
.c-number { width: 95px; }
.c-name { width: 127px; }
.c-user { width: 101px; }
.c-more { width: 25px; }
.c-source { width: 44px; }
.c-type { width: 38px; }
.c-task { width: 76px; }

.queue th {
  height: 39px;
  padding: 4px 0 0;
  border-right: 1px solid #fff;
  border-bottom: 1px solid #cfd2d6;
  background: linear-gradient(#fff 25%, #f7f8fa 25%, #f1f3f6);
  font-weight: normal;
  white-space: nowrap;
}

.queue .delete-head {
  padding: 1px 3px 0 0;
  text-align: right;
}

.delete-head label {
  display: block;
}

.delete-head input {
  margin-right: 5px;
}

.queue td {
  height: 21px;
  padding: 0 0 0 5px;
  border-right: 1px solid #5f6064;
  border-bottom: 1px solid #5f6064;
  background: #fff;
  white-space: nowrap;
  overflow: hidden;
}

.queue td:nth-child(3) {
  padding-left: 3px;
}

.queue td.num {
  padding: 0 3px 0 0;
  text-align: right;
}

.queue td.mark {
  padding-left: 7px;
  background: #f0f0f0;
}

.current {
  display: block;
  width: 0;
  border: 5px solid transparent;
  border-left-color: #000;
  border-right: none;
}

.queue td.icon {
  padding: 0;
  text-align: center;
}

.queue td svg {
  display: block;
  width: 16px;
  height: 16px;
  margin: 0 auto;
}

.queue input {
  display: block;
  appearance: none;
  width: 13px;
  height: 13px;
  margin-left: auto;
  border: 1px solid #8e8f8f;
  background: linear-gradient(135deg, #cbcfd5, #f6f6f6);
  box-shadow: inset 0 0 0 2px #f4f4f4;
}

.queue td input {
  margin: 0 auto;
}

.queue td.more {
  padding: 0 1px;
}

.more button {
  display: block;
  width: 22px;
  height: 18px;
  padding: 2px 6px 0 0;
  border: 1px solid #707070;
  border-radius: 2px;
  background: linear-gradient(#f2f2f2, #ebebeb 50%, #dddddd 50%, #cfcfcf);
}

.more button:disabled {
  border-color: #adb2b5;
  background: #f4f4f4;
}

.panel-buttons {
  display: flex;
  gap: 14px;
  padding: 10px 0 0 5px;
}

.purge {
  width: 122px;
  margin-left: auto;
}

/* Status bar */
.statusbar {
  display: flex;
  align-items: center;
  height: 34px;
  padding-right: 3px;
  background: #b8c9df;
}

.statusbar span {
  display: flex;
  align-items: center;
  min-width: 12px;
  height: 28px;
  padding: 4px 3px 0 4px;
  border-right: 1px solid #d8dade;
}

.statusbar .off {
  color: #77777b;
}

.statusbar .status-date {
  padding: 4px 7px 0 10px;
}

.statusbar .spacer {
  flex: 1;
}
```
